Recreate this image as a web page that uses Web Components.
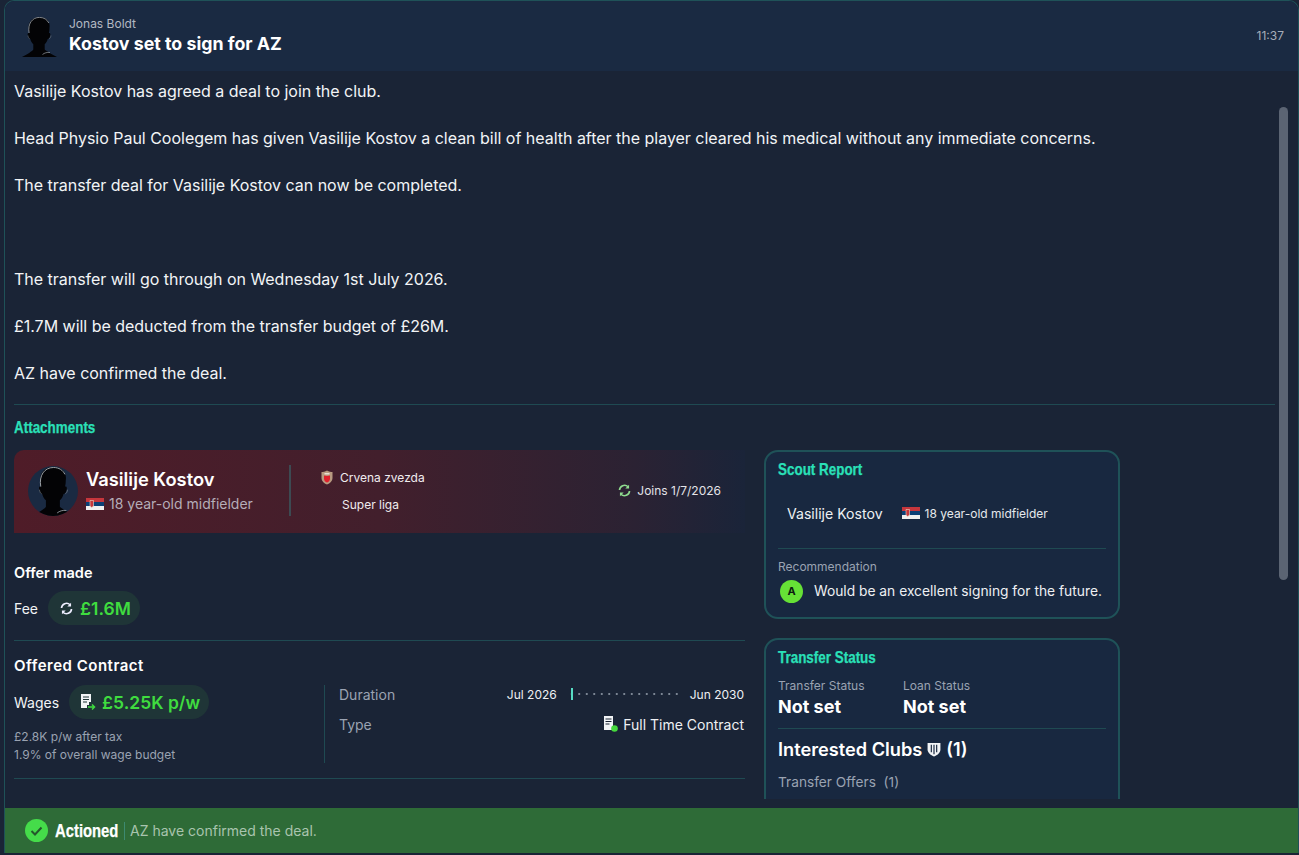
<!DOCTYPE html>
<html>
<head>
<meta charset="utf-8">
<style>
html, body { margin: 0; height: 100%; background: #1a2436; overflow: hidden; }
body { font-family: Inter, "Noto Sans", sans-serif; color: #f2f4f6; }
</style>
</head>
<body>
<inbox-message></inbox-message>

<script>
const ICONS = {
  head: `<path d="M17.500 0C10 0 6.500 5 6.500 11c0 2 .2 3.500.6 5-1.300-.4-1.700.6-1.300 2.500.4 2 1.300 3.500 2.500 3.500.6 2.500 1.700 4 3 5.200v5.300C10.500 34 5 37.500 0 40h35c-5-2.500-10.500-6-12.300-7.500v-5.300c1.300-1.200 2.400-2.700 3-5.200 1.200 0 2.100-1.500 2.500-3.500.4-1.900 0-2.900-1.300-2.500.4-1.500.6-3 .6-5C28.500 5 25 0 17.500 0z" fill="#030305"/>
         <path d="M7.100 16C5.500 7 10 .4 17.500.4c4.500 0 7.700 2.200 9.300 5.600" fill="none" stroke="#b4bac0" stroke-width=".7"/>
         <path d="M6 18.500c.2 1.500.8 3 1.800 3.300M29 18.500c-.2 1.500-.8 3-1.800 3.300" fill="none" stroke="#7d838a" stroke-width=".5"/>
         <path d="M28 35.500c-3-.4-5.500.4-7.500 2" fill="none" stroke="#9aa0a6" stroke-width=".7"/>`,
  sync: `<path d="M3 8.500A6 6 0 0 1 13.200 4.500" fill="none" stroke="currentColor" stroke-width="2"/><path d="M14.500 2v4.500H10z" fill="currentColor"/>
         <path d="M15 9.500A6 6 0 0 1 4.800 13.500" fill="none" stroke="currentColor" stroke-width="2"/><path d="M3.500 16v-4.500H8z" fill="currentColor"/>`
};

const svg = (name, w, h, box) => `<svg width="${w}" height="${h}" viewBox="${box}" aria-hidden="true">${ICONS[name]}</svg>`;

const serbiaFlag = `<svg width="18" height="12" viewBox="0 0 18 12" aria-hidden="true">
  <rect width="18" height="4" fill="#c6363c"/><rect y="4" width="18" height="4" fill="#0c4076"/><rect y="8" width="18" height="4" fill="#f0f0f0"/>
  <path d="M4 2.500h3.500v5.500L5.750 9.500 4 8z" fill="#c6363c" stroke="#e8dcc8" stroke-width=".6"/></svg>`;

// no condensed family is installed, so the green headings get squeezed
const narrowCss = `.nar { display: inline-block; font-family: "Liberation Sans", sans-serif; font-weight: 700; -webkit-text-stroke: .25px currentColor; transform: scaleX(.79); transform-origin: left center; white-space: nowrap; }`;

class MessageHeader extends HTMLElement {
  connectedCallback() {
    this.attachShadow({ mode: "open" });
    this.shadowRoot.innerHTML = `
    <style>
      :host { display: flex; align-items: center; height: 70px; padding: 0 14px 0 17px; background: #1a2a42; flex: none; }
      .pic { margin-right: 12px; margin-top: 2px; flex: none; }
      .txt { flex: 1; display: flex; flex-direction: column; gap: 1px; margin-top: -1px; }
      .from { font-size: 12px; line-height: 15px; color: #b3b9c3; }
      .subject { font-size: 17.800px; line-height: 23px; font-weight: 700; color: #fff; }
      .time { font-size: 12px; color: #a6adb9; margin-top: -2px; }
    </style>
    ${svg("head", 35, 40, "0 0 35 40").replace("<svg", '<svg class="pic"')}
    <div class="txt"><span class="from">${this.getAttribute("from")}</span><span class="subject">${this.getAttribute("subject")}</span></div>
    <span class="time">${this.getAttribute("time")}</span>`;
  }
}

class PlayerCard extends HTMLElement {
  connectedCallback() {
    this.attachShadow({ mode: "open" });
    this.shadowRoot.innerHTML = `
    <style>
      :host { display: flex; align-items: center; height: 83px; padding: 0 24px 2px 14px; box-sizing: border-box;
        border-top-left-radius: 10px; background: linear-gradient(90deg, #4f1c28 0%, #421f2c 50%, #2b2233 85%, #1a2439 100%); }
      .pic { width: 50px; height: 50px; border-radius: 50%; background: #1a2a42; overflow: hidden; flex: none; margin-right: 8px; display: flex; justify-content: center; }
      .pic svg { display: block; margin-top: 1px; }
      .who { width: 203px; flex: none; }
      .name { font-size: 18.300px; line-height: 24px; font-weight: 600; color: #fff; }
      .sub { display: flex; align-items: center; gap: 5px; font-size: 14px; line-height: 20px; color: #b5adb8; margin-top: 3px; }
      .sep { width: 2px; height: 51px; background: #3d4a52; flex: none; margin-right: 30px; }
      .club { flex: 1; font-size: 12px; color: #f0ecee; }
      .club div { display: flex; align-items: center; height: 27px; }
      .club svg { margin-right: 7px; }
      .club .lg { padding-left: 21px; }
      .joins { display: flex; align-items: center; gap: 5px; font-size: 12px; color: #e4e4e8; }
      .joins svg { color: #8fdc8f; }
    </style>
    <div class="pic">${svg("head", 43, 49, "0 0 35 40")}</div>
    <div class="who">
      <div class="name">Vasilije Kostov</div>
      <div class="sub">${serbiaFlag}<span>18 year-old midfielder</span></div>
    </div>
    <div class="sep"></div>
    <div class="club">
      <div><svg width="12" height="15" viewBox="0 0 12 15" aria-hidden="true"><path d="M6 .5c2 1.500 4 1.500 5.500 1.500V8c0 3-2.500 5.500-5.500 6.500C3 13.500.5 11 .5 8V2C2 2 4 2 6 .5z" fill="#b79a80"/><path d="M3 5.500c2 .5 4 .5 6 0V9c0 1.500-1.500 3-3 3.500C4.500 12 3 10.500 3 9z" fill="#e0202c"/><path d="M3.500 3h5v1.500h-5z" fill="#e9dfd2"/></svg><span>Crvena zvezda</span></div>
      <div class="lg">Super liga</div>
    </div>
    <div class="joins">${svg("sync", 15, 15, "0 0 18 18")}<span>Joins 1/7/2026</span></div>`;
  }
}

class MoneyPill extends HTMLElement {
  connectedCallback() {
    this.attachShadow({ mode: "open" });
    this.shadowRoot.innerHTML = `
    <style>
      :host { display: inline-flex; align-items: center; gap: 6px; height: 34px; padding: 0 9px 0 11px; border-radius: 17px; background: #1f3537;
        color: #3fdc3f; font-size: 17.500px; font-weight: 600; }
      ::slotted(svg) { flex: none; }
    </style>
    <slot name="icon"></slot><slot></slot>`;
  }
}

class SideCard extends HTMLElement {
  connectedCallback() {
    this.attachShadow({ mode: "open" });
    this.shadowRoot.innerHTML = `
    <style>
      :host { display: block; box-sizing: border-box; border: 2px solid #1f5258; border-radius: 14px; background: #182840; padding: 6px 12px 0; }
      h3 { margin: 0; font-size: 17px; line-height: 22px; color: #2ae0b8; }
      ${narrowCss}
    </style>
    <h3><span class="nar">${this.getAttribute("heading")}</span></h3><slot></slot>`;
  }
}

class ScoutReport extends HTMLElement {
  connectedCallback() {
    this.attachShadow({ mode: "open" });
    this.shadowRoot.innerHTML = `
    <style>
      :host { display: block; font-size: 13px; }
      .who { display: flex; align-items: center; height: 64px; padding: 0 0 3px 9px; border-bottom: 1px solid #1f4a52; }
      .n { font-size: 14.100px; color: #edf0f3; margin-right: 19px; }
      .who svg { margin-right: 5px; }
      .a { font-size: 12px; color: #e6e9ec; }
      .lab { margin-top: 10px; font-size: 12px; line-height: 16px; color: #9aa3b2; }
      .rec { display: flex; align-items: center; gap: 11px; margin: 4px 0 0 2px; height: 24px; font-size: 13.800px; color: #eef0f3; white-space: nowrap; padding-bottom: 14px; }
      .grade { width: 23px; height: 23px; border-radius: 50%; background: #66e136; color: #0d1a10; font-size: 11px; font-weight: 700; display: flex; align-items: center; justify-content: center; flex: none; }
    </style>
    <div class="who"><span class="n">Vasilije Kostov</span>${serbiaFlag}<span class="a">18 year-old midfielder</span></div>
    <div class="lab">Recommendation</div>
    <div class="rec"><span class="grade">A</span><span>Would be an excellent signing for the future.</span></div>`;
  }
}

class TransferStatus extends HTMLElement {
  connectedCallback() {
    this.attachShadow({ mode: "open" });
    this.shadowRoot.innerHTML = `
    <style>
      :host { display: block; }
      .cols { display: flex; padding: 9px 0 9px; border-bottom: 1px solid #1f4a52; }
      .cols div { width: 125px; }
      .lab { display: block; font-size: 12px; line-height: 16px; color: #9aa3b2; }
      .val { display: block; font-size: 18px; line-height: 25px; font-weight: 700; color: #fff; }
      .ic { display: flex; align-items: center; gap: 5px; margin-top: 8px; font-size: 18.200px; line-height: 25px; font-weight: 600; color: #fff; white-space: nowrap; }
      .off { margin-top: 10px; font-size: 13.700px; line-height: 20px; color: #9aa3b2; padding-bottom: 20px; }
    </style>
    <div class="cols"><div><span class="lab">Transfer Status</span><span class="val">Not set</span></div><div><span class="lab">Loan Status</span><span class="val">Not set</span></div></div>
    <div class="ic"><span>Interested Clubs</span><svg width="14" height="15" viewBox="0 0 13 14" aria-hidden="true"><path d="M.5 1h12v6c0 3-3 5.500-6 6.500-3-1-6-3.500-6-6.500z" fill="#f2f4f6"/><path d="M4 2.500v7M6.500 2.500v9M9 2.500v7" stroke="#182840" stroke-width="1.100"/></svg><span>(1)</span></div>
    <div class="off">Transfer Offers&nbsp; (1)</div>`;
  }
}

class OfferPanel extends HTMLElement {
  connectedCallback() {
    this.attachShadow({ mode: "open" });
    this.shadowRoot.innerHTML = `
    <style>
      :host { display: block; color: #f2f4f6; }
      h4 { margin: 0; font-size: 14.500px; line-height: 20px; font-weight: 600; color: #fff; }
      h4.wide { font-size: 15px; letter-spacing: .5px; margin-top: 15px; }
      .offer { margin-top: 30px; padding-bottom: 15px; border-bottom: 1px solid #1f4a52; }
      .row { display: flex; align-items: center; gap: 10px; font-size: 14px; margin-top: 8px; }
      .contract { display: flex; margin-top: 9px; padding-bottom: 15px; border-bottom: 1px solid #1f4a52; }
      .left { width: 310px; flex: none; border-right: 1px solid #1f4a52; height: 78px; }
      .left .row { margin-top: 0; }
      .small { margin-top: 9px; font-size: 12px; line-height: 18px; color: #9aa3b2; }
      .right { flex: 1; padding: 0 1px 0 14px; margin-top: -6px; font-size: 14px; }
      .line { display: flex; align-items: center; justify-content: space-between; height: 30px; }
      .line .k { color: #9aa3b2; }
      .dur { display: flex; align-items: center; font-size: 12px; color: #eef0f3; }
      .bar { width: 112px; margin: 0 10px 0 11px; height: 8px; position: relative;
        background: radial-gradient(circle, #7c8694 1px, transparent 1.300px) 0 0 / 7.500px 8px repeat-x; }
      .bar i { position: absolute; left: 3px; top: 0; width: 2px; height: 12px; margin-top: -2px; background: #57dcc4; }
      .type { display: flex; align-items: center; gap: 5px; font-size: 14px; color: #eef0f3; }
    </style>
    <div class="offer">
      <h4>Offer made</h4>
      <div class="row"><span>Fee</span>
        <money-pill><span slot="icon" style="color:#eef;display:flex">${svg("sync", 15, 15, "0 0 18 18")}</span>£1.6M</money-pill>
      </div>
    </div>
    <h4 class="wide">Offered Contract</h4>
    <div class="contract">
      <div class="left">
        <div class="row"><span>Wages</span>
          <money-pill><svg slot="icon" width="16" height="16" viewBox="0 0 16 16" aria-hidden="true"><path d="M1 0h10v8H9v3H7v3H1z" fill="#f2f4f6"/><path d="M3 3h6M3 5.500h6M3 8h4" stroke="#1f3537" stroke-width="1"/><path d="M8 13h6M12 10.500l2.500 2.500-2.500 2.500" fill="none" stroke="#3fdc3f" stroke-width="1.500"/></svg>£5.25K p/w</money-pill>
        </div>
        <div class="small">£2.8K p/w after tax<br>1.9% of overall wage budget</div>
      </div>
      <div class="right">
        <div class="line"><span class="k">Duration</span><span class="dur">Jul 2026<span class="bar"><i></i></span>Jun 2030</span></div>
        <div class="line"><span class="k">Type</span><span class="type"><svg width="15" height="16" viewBox="0 0 15 16" aria-hidden="true"><path d="M1 0h9v14H1z" fill="#f2f4f6"/><path d="M2.500 3h6M2.500 5.500h6M2.500 8h4" stroke="#1a2433" stroke-width="1"/><circle cx="11.500" cy="12.500" r="3.300" fill="#45d93d"/></svg>Full Time Contract</span></div>
      </div>
    </div>`;
  }
}

class MessageBody extends HTMLElement {
  connectedCallback() {
    this.attachShadow({ mode: "open" });
    this.shadowRoot.innerHTML = `
    <style>
      :host { display: block; flex: 1; min-height: 0; position: relative; overflow: hidden; margin-bottom: 9px; }
      .pad { padding: 0 23px 0 9px; }
      p { margin: 0; height: 47px; font-size: 16px; line-height: 41px; letter-spacing: -.02px; color: #f2f4f6; }
      .msg { height: 333px; border-bottom: 1px solid #1f4a52; }
      h2 { margin: 11px 0 11px; font-size: 17px; line-height: 22px; color: #2ae0b8; }
      ${narrowCss}
      .cols { display: grid; grid-template-columns: 731px 356px; column-gap: 19px; align-items: start; }
      .side { display: flex; flex-direction: column; gap: 19px; }
      .thumb { position: absolute; right: 10px; top: 36px; width: 9px; height: 473px; border-radius: 5px; background: #5b6473; }
    </style>
    <div class="pad">
      <div class="msg">
        <p>Vasilije Kostov has agreed a deal to join the club.</p>
        <p>Head Physio Paul Coolegem has given Vasilije Kostov a clean bill of health after the player cleared his medical without any immediate concerns.</p>
        <p>The transfer deal for Vasilije Kostov can now be completed.</p>
        <p></p>
        <p>The transfer will go through on Wednesday 1st July 2026.</p>
        <p>£1.7M will be deducted from the transfer budget of £26M.</p>
        <p>AZ have confirmed the deal.</p>
      </div>
      <h2><span class="nar">Attachments</span></h2>
      <div class="cols">
        <div><player-card></player-card><offer-panel></offer-panel></div>
        <div class="side">
          <side-card heading="Scout Report"><scout-report></scout-report></side-card>
          <side-card heading="Transfer Status"><transfer-status></transfer-status></side-card>
        </div>
      </div>
    </div>
    <div class="thumb"></div>`;
  }
}

class ActionBar extends HTMLElement {
  connectedCallback() {
    this.attachShadow({ mode: "open" });
    this.shadowRoot.innerHTML = `
    <style>
      :host { display: flex; align-items: center; height: 45px; padding-left: 20px; background: #2e6b37; flex: none; }
      svg { margin-right: 7px; flex: none; }
      ${narrowCss}
      .nar { font-size: 19px; color: #fff; transform: scaleX(.78); }
      .lab { width: 69px; flex: none; }
      .sep { width: 1px; height: 18px; background: #3d8a70; flex: none; }
      .msg { font-size: 14px; color: #a9c4ae; margin-left: 5px; }
    </style>
    <svg width="23" height="23" viewBox="0 0 23 23" aria-hidden="true"><circle cx="11.500" cy="11.500" r="11.500" fill="#45dc4a"/><path d="M6.500 12l3.500 3.500 6.500-7" fill="none" stroke="#24582c" stroke-width="2"/></svg>
    <div class="lab"><span class="nar">Actioned</span></div><div class="sep"></div><span class="msg"><slot></slot></span>`;
  }
}

class InboxMessage extends HTMLElement {
  connectedCallback() {
    this.attachShadow({ mode: "open" });
    this.shadowRoot.innerHTML = `
    <style>
      :host { display: flex; flex-direction: column; box-sizing: border-box; height: 853px; overflow: hidden; position: relative;
        border: 1px solid #1f5258; border-bottom: 0; margin-left: 4px; border-top-left-radius: 10px; border-top-right-radius: 10px; background: #1a2436; }
    </style>
    <message-header from="Jonas Boldt" subject="Kostov set to sign for AZ" time="11:37"></message-header>
    <message-body></message-body>
    <action-bar>AZ have confirmed the deal.</action-bar>`;
  }
}

customElements.define("money-pill", MoneyPill);
customElements.define("message-header", MessageHeader);
customElements.define("player-card", PlayerCard);
customElements.define("side-card", SideCard);
customElements.define("scout-report", ScoutReport);
customElements.define("transfer-status", TransferStatus);
customElements.define("offer-panel", OfferPanel);
customElements.define("message-body", MessageBody);
customElements.define("action-bar", ActionBar);
customElements.define("inbox-message", InboxMessage);
</script>
</body>
</html>
